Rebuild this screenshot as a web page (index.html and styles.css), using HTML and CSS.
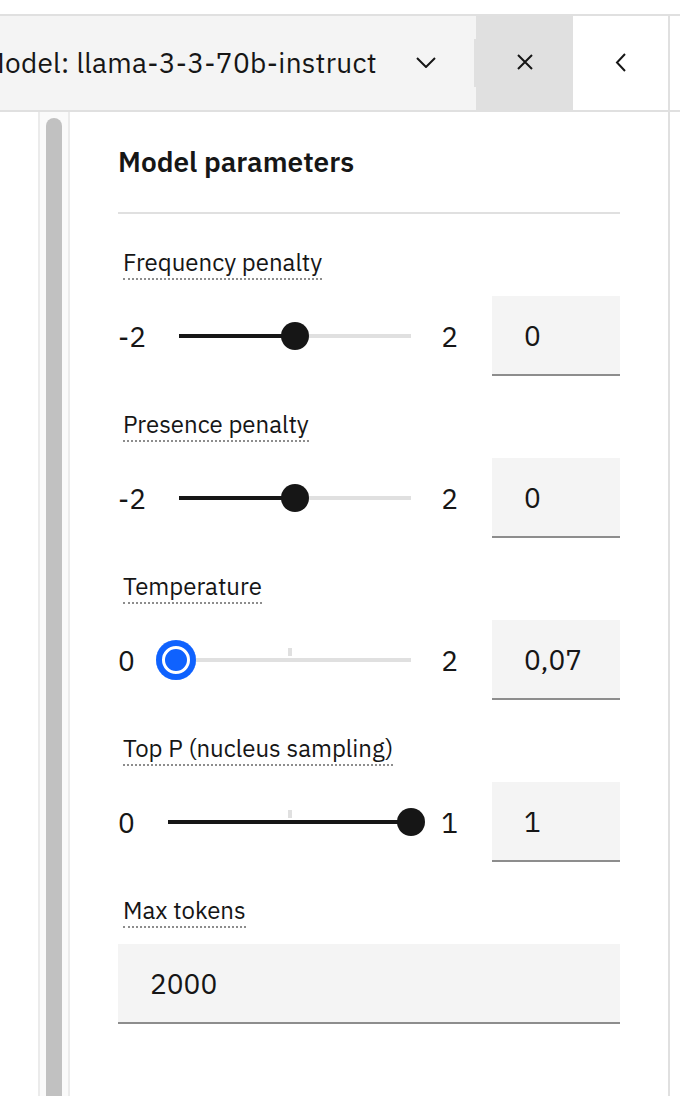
FILE: index.html
```html
<!DOCTYPE html>
<html lang="en">
<head>
  <meta charset="UTF-8" />
  <meta name="viewport" content="width=device-width, initial-scale=1.0"/>
  <title>Model parameters</title>
  <link rel="stylesheet" href="styles.css">
</head>
<body>

<div class="topbar">
  <div class="model-select">
    <span class="model-name">Model: llama-3-3-70b-instruct</span>
    <svg class="chevron-down" width="20" height="11" viewBox="0 0 20 11"><path d="M1 1 L10 10 L19 1" fill="none" stroke="#161616" stroke-width="2"/></svg>
  </div>
  <div class="divider"></div>
  <div class="icon-btn close-btn">
    <svg width="16" height="16" viewBox="0 0 16 16"><path d="M1 1 L15 15 M15 1 L1 15" stroke="#161616" stroke-width="2"/></svg>
  </div>
  <div class="icon-btn collapse-btn">
    <svg width="11" height="19" viewBox="0 0 11 19"><path d="M10 1 L2 9.5 L10 18" fill="none" stroke="#161616" stroke-width="2"/></svg>
  </div>
</div>

<div class="workspace">
  <div class="side-blank"></div>
  <div class="scroll-track"><div class="scroll-thumb"></div></div>

  <aside class="panel">
    <h2 class="panel-title">Model parameters</h2>

    <div class="param">
      <span class="param-label">Frequency penalty</span>
      <div class="slider-row">
        <span class="range-label">-2</span>
        <div class="slider">
          <div class="slider-fill" style="width: 50%"></div>
          <span class="slider-thumb" style="left: 50%"></span>
        </div>
        <span class="range-label">2</span>
        <div class="num-input">0</div>
      </div>
    </div>

    <div class="param">
      <span class="param-label">Presence penalty</span>
      <div class="slider-row">
        <span class="range-label">-2</span>
        <div class="slider">
          <div class="slider-fill" style="width: 50%"></div>
          <span class="slider-thumb" style="left: 50%"></span>
        </div>
        <span class="range-label">2</span>
        <div class="num-input">0</div>
      </div>
    </div>

    <div class="param">
      <span class="param-label">Temperature</span>
      <div class="slider-row">
        <span class="range-label">0</span>
        <div class="slider">
          <span class="slider-tick"></span>
          <div class="slider-fill" style="width: 3.5%"></div>
          <span class="slider-thumb focused" style="left: 3.5%"></span>
        </div>
        <span class="range-label">2</span>
        <div class="num-input">0,07</div>
      </div>
    </div>

    <div class="param">
      <span class="param-label">Top P (nucleus sampling)</span>
      <div class="slider-row">
        <span class="range-label">0</span>
        <div class="slider">
          <span class="slider-tick"></span>
          <div class="slider-fill" style="width: 100%"></div>
          <span class="slider-thumb" style="left: 100%"></span>
        </div>
        <span class="range-label">1</span>
        <div class="num-input">1</div>
      </div>
    </div>

    <div class="param">
      <span class="param-label">Max tokens</span>
      <div class="field-row">
        <div class="num-input wide">2000</div>
      </div>
    </div>
  </aside>
</div>

</body>
</html>
```

FILE: styles.css
```css
body {
  margin: 0;
  font-family: "IBM Plex Sans", "Liberation Sans", Arial, sans-serif;
  color: #161616;
  background-color: #ffffff;
  width: 680px;
  height: 1096px;
  overflow: hidden;
}

/* header strip */
.topbar {
  display: flex;
  margin-top: 14px;
  height: 94px;
  border-top: 2px solid #e0e0e0;
  border-bottom: 2px solid #e0e0e0;
}
.model-select {
  flex: 0 0 474px;
  display: flex;
  align-items: center;
  justify-content: flex-end;
  gap: 39px;
  padding-right: 38px;
  padding-bottom: 2px;
  box-sizing: border-box;
  background-color: #f4f4f4;
  overflow: hidden;
  white-space: nowrap;
}
.model-name {
  font-size: 28px;
  letter-spacing: 0.3px;
}
.chevron-down {
  flex-shrink: 0;
}
.divider {
  flex: 0 0 2px;
  background: linear-gradient(#f4f4f4 23px, #e0e0e0 23px, #e0e0e0 71px, #f4f4f4 71px);
}
.icon-btn {
  display: flex;
  align-items: center;
  justify-content: center;
  padding-bottom: 2px;
  box-sizing: border-box;
}
.close-btn {
  flex: 0 0 97px;
  background-color: #e0e0e0;
}
.collapse-btn {
  flex: 0 0 97px;
  background-color: #ffffff;
  border-right: 2px solid #e0e0e0;
}

/* body area */
.workspace {
  display: flex;
  height: 984px;
}
.side-blank {
  flex: 0 0 38px;
  border-right: 2px solid #ebebeb;
}
.scroll-track {
  flex: 0 0 28px;
  background-color: #fafafa;
  border-right: 2px solid #ebebeb;
}
.scroll-thumb {
  width: 16px;
  margin: 6px 0 0 6px;
  height: 978px;
  background-color: #c1c1c1;
  border-radius: 8px 8px 0 0;
}
.panel {
  flex: 0 0 600px;
  display: flex;
  flex-direction: column;
  align-items: flex-start;
  padding: 30px 48px 0 48px;
  box-sizing: border-box;
  border-right: 2px solid #e0e0e0;
}
.panel-title {
  align-self: stretch;
  margin: 0;
  font-size: 28px;
  font-weight: 600;
  line-height: 40px;
  padding-bottom: 30px;
  border-bottom: 2px solid #e0e0e0;
}

/* parameters */
.param {
  align-self: stretch;
  margin-top: 33px;
}
.param-label {
  display: inline-block;
  margin-left: 5px;
  font-size: 24px;
  line-height: 31px;
  border-bottom: 2px dotted #8d8d8d;
  margin-bottom: 1px;
}
.slider-row, .field-row {
  display: flex;
  align-items: center;
  gap: 33px;
  margin-top: 15px;
}
.range-label {
  font-size: 28px;
}
.slider {
  position: relative;
  flex: 1;
  height: 4px;
  margin-right: -3px;
  background-color: #e0e0e0;
}
.slider-fill {
  height: 100%;
  background-color: #161616;
}
.slider-tick {
  position: absolute;
  left: 50%;
  top: -10px;
  width: 4px;
  height: 8px;
  margin-left: -2px;
  background-color: #e0e0e0;
}
.slider-thumb {
  position: absolute;
  top: 50%;
  width: 28px;
  height: 28px;
  border-radius: 50%;
  background-color: #161616;
  transform: translate(-50%, -50%);
}
.slider-thumb.focused {
  width: 40px;
  height: 40px;
  background-color: #0f62fe;
  box-shadow: inset 0 0 0 6px #0f62fe, inset 0 0 0 9px #ffffff;
}
.num-input {
  flex: 0 0 128px;
  height: 80px;
  margin-left: 1px;
  padding-left: 32px;
  box-sizing: border-box;
  display: flex;
  align-items: center;
  font-size: 28px;
  background-color: #f4f4f4;
  border-bottom: 2px solid #8d8d8d;
}
.num-input.wide {
  flex: 1;
  margin-left: 0;
}
```
